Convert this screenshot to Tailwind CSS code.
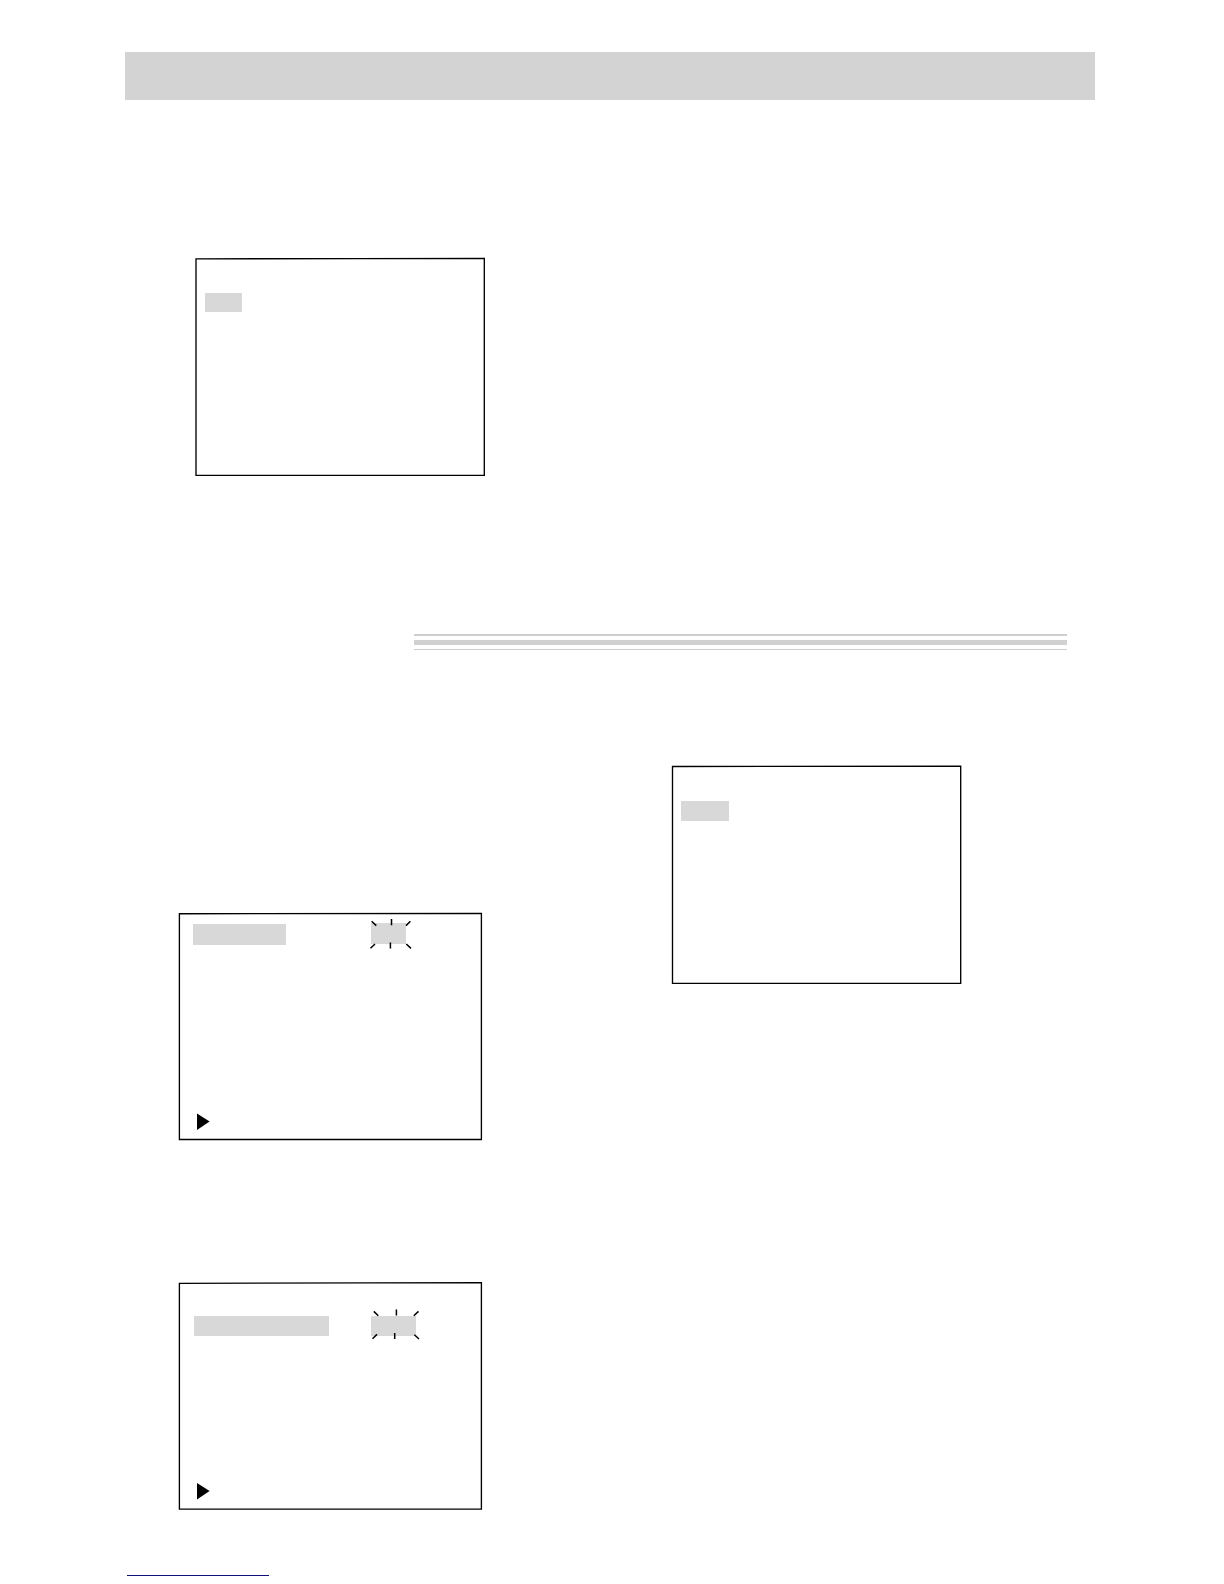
<!DOCTYPE html>
<html lang="en">
<head>
    <meta charset="UTF-8">
    <meta name="viewport" content="width=device-width, initial-scale=1.0">
    <title>Menu Screens</title>
    <script src="https://cdn.jsdelivr.net/npm/@tailwindcss/browser@4"></script>
</head>
<body class="bg-white min-h-screen">
    <!-- Title band -->
    <header class="pt-[52px] pl-[125px] pr-[129px]">
        <div class="h-12 bg-[#d3d3d3]"></div>
    </header>

    <main>
        <!-- First menu screen -->
        <section class="pt-[158px] pl-[195px]">
            <div class="relative w-[290px] h-[218px] pt-[35px] pl-[10px]">
                <svg class="absolute inset-0 w-full h-full overflow-visible" viewBox="0 0 290 218" fill="none" stroke="#000" stroke-width="1.35" aria-hidden="true">
                    <path d="M1 .9 160 .6 289.3 .4V217.4H1Z"/>
                </svg>
                <div class="relative w-[37px] h-[19px] bg-[#d8d8d8]"></div>
            </div>
        </section>

        <!-- Section divider -->
        <div class="pt-[158px] pl-[414px] pr-[157px]">
            <div class="h-[2px] bg-[#cecece]"></div>
            <div class="h-[5px] mt-1 bg-[#d1d1d1]"></div>
            <div class="h-px mt-1 bg-[#cecece]"></div>
        </div>

        <section class="flex items-start gap-[190px] pt-[116px] pl-[179px]">
            <!-- Left column -->
            <div class="w-[303px] shrink-0 pt-[147px]">
                <div class="relative h-[227px] pt-[11px] px-[14px] pb-[10px] flex flex-col justify-between">
                    <svg class="absolute inset-0 w-full h-full overflow-visible" viewBox="0 0 303 227" fill="none" stroke="#000" stroke-width="1.35" aria-hidden="true">
                        <path d="M.4 .7 302.4 .4V226.5H.4Z"/>
                    </svg>
                    <div class="relative flex items-start gap-[85px]">
                        <div class="w-[93px] h-[21px] bg-[#d8d8d8]"></div>
                        <div class="relative w-[35px] h-[21px] -mt-px bg-[#d8d8d8]">
                            <svg class="absolute inset-0 w-full h-full overflow-visible" viewBox="0 0 35 21" fill="none" stroke="#000" stroke-width="1.5" aria-hidden="true">
                                <path d="M.6-1.8 5.3 2.6M20.5-4V2.2M39.4-1.8 35 2.6M-.5 25.2 4 21M19.4 19.5V25.6M35.3 21 40 25.4"/>
                            </svg>
                        </div>
                    </div>
                    <svg class="relative ml-1 w-[13px] h-[17px]" viewBox="0 0 13 17" aria-hidden="true">
                        <path d="M0 .4V17L12.6 8.5Z"/>
                    </svg>
                </div>

                <div class="relative h-[228px] mt-[142px] pt-[34px] pl-[15px] pb-[10px] flex flex-col justify-between">
                    <svg class="absolute inset-0 w-full h-full overflow-visible" viewBox="0 0 303 228" fill="none" stroke="#000" stroke-width="1.35" aria-hidden="true">
                        <path d="M.4 1.3 302.4 .6V227.1H.4Z"/>
                    </svg>
                    <div class="relative flex items-start gap-[42px]">
                        <div class="w-[135px] h-5 bg-[#d8d8d8]"></div>
                        <div class="relative w-[45px] h-5 bg-[#d8d8d8]">
                            <svg class="absolute inset-0 w-full h-full overflow-visible" viewBox="0 0 45 20" fill="none" stroke="#000" stroke-width="1.5" aria-hidden="true">
                                <path d="M2.8-4.6 7.3-.2M25.4-6.5V-.4M47.5-4.6 42.8-.2M1.5 22.8 6 18.4M23.7 17V23M43.4 18.7 48 23"/>
                            </svg>
                        </div>
                    </div>
                    <svg class="relative ml-[3px] w-[13px] h-[17px]" viewBox="0 0 13 17" aria-hidden="true">
                        <path d="M0 0V16.5L12.6 8Z"/>
                    </svg>
                </div>
            </div>

            <!-- Right column -->
            <div class="relative w-[290px] h-[218px] shrink-0 pt-[35px] pl-[9px]">
                <svg class="absolute inset-0 w-full h-full overflow-visible" viewBox="0 0 290 218" fill="none" stroke="#000" stroke-width="1.35" aria-hidden="true">
                    <path d="M.5 .5 288.7 .3V217.4H.5Z"/>
                </svg>
                <div class="relative w-12 h-5 bg-[#d8d8d8]"></div>
            </div>
        </section>
    </main>

    <!-- Footer rule -->
    <footer class="pt-[65px] pl-[127px] pb-2">
        <div class="w-[142px] h-px bg-[#10107c]"></div>
    </footer>
</body>
</html>
